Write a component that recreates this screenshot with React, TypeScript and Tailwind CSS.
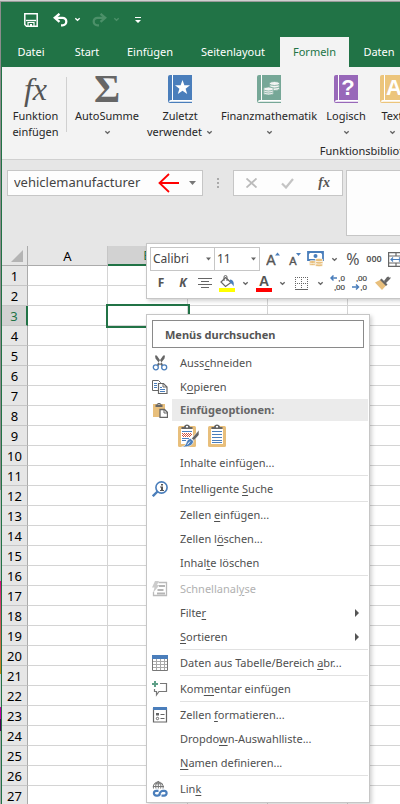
import { useState, type ReactNode } from "react";

const COLUMNS = ["A", "B", "C", "D", "E", "F", "G", "H", "I", "J", "K", "L"];
const ROWS = Array.from({ length: 27 }, (_, i) => i + 1);
const TABS = ["Datei", "Start", "Einfügen", "Seitenlayout", "Formeln", "Daten"];

const TAB_WIDTHS: Record<string, string> = {
  Datei: "w-[58px]",
  Start: "w-[54px]",
  Einfügen: "w-[72px]",
  Seitenlayout: "w-[94px]",
  Formeln: "w-[69px]",
  Daten: "w-[60px]",
};

type IconProps = { className?: string };

function Chevron({ className = "text-[#666]" }: IconProps) {
  return (
    <svg width="7" height="5" viewBox="0 0 7 5" className={`shrink-0 ${className}`} aria-hidden="true">
      <path d="M1.300 1.200L3.500 3.300L5.700 1.200" fill="none" stroke="currentColor" strokeWidth="1.300" />
    </svg>
  );
}

function Caret({ className = "text-[#666]" }: IconProps) {
  return (
    <svg width="7" height="4" viewBox="0 0 7 4" className={`shrink-0 ${className}`} aria-hidden="true">
      <path d="M0 0h7L3.500 4z" fill="currentColor" />
    </svg>
  );
}

function SaveIcon() {
  return (
    <svg width="14" height="14" viewBox="0 0 14 14" fill="none" stroke="#fff" aria-hidden="true">
      <path d="M.8.800h12.400v12.400H2.500L.8 11.500z" strokeWidth="1.500" />
      <path d="M2 7.500h10" strokeWidth="1.400" />
      <path d="M4 13V9.500h6V13" strokeWidth="1.200" />
      <path d="M6 11h2v2H6z" fill="#fff" stroke="none" />
    </svg>
  );
}

function UndoIcon({ className = "" }: IconProps) {
  return (
    <svg width="15" height="14" viewBox="0 0 15 14" fill="none" stroke="currentColor" strokeWidth="2.300" className={className} aria-hidden="true">
      <path d="M6.500 .8L1.800 4.800L6.500 8.800" />
      <path d="M2 4.800h7.500a3.800 3.800 0 0 1 0 7.600H8" />
    </svg>
  );
}

function BookIcon({ color, children }: { color: string; children: ReactNode }) {
  return (
    <svg width="24" height="28" viewBox="0 0 24 28" aria-hidden="true">
      <path d="M2 0h22v28H2a2 2 0 0 1-2-2V2a2 2 0 0 1 2-2z" fill={color} />
      <path d="M4.500 0v25" stroke="#fff" />
      <path d="M24 25.800H3a1.500 1.500 0 0 0-1.500 1" fill="none" stroke="#fff" strokeWidth="1.800" />
      {children}
    </svg>
  );
}

function StarBook() {
  return (
    <BookIcon color="#4a7ebb">
      <path d="M14.500 5l1.900 5.200 5.600.1-4.400 3.400 1.600 5.300-4.700-3.200-4.700 3.200 1.600-5.300L7 10.300l5.600-.1z" fill="#fff" />
    </BookIcon>
  );
}

function CoinsBook() {
  return (
    <BookIcon color="#76a797">
      <g fill="#f3f3f3" stroke="#76a797" strokeWidth=".8">
        <ellipse cx="17.500" cy="13.500" rx="5" ry="2" />
        <ellipse cx="17.500" cy="11" rx="5" ry="2" />
        <ellipse cx="17.500" cy="8.500" rx="5" ry="2" />
        <ellipse cx="11.500" cy="18" rx="5" ry="2" />
        <ellipse cx="11.500" cy="16" rx="5" ry="2" />
        <ellipse cx="11.500" cy="14" rx="5" ry="2" />
      </g>
    </BookIcon>
  );
}

function LetterBook({ color, letter }: { color: string; letter: string }) {
  return (
    <BookIcon color={color}>
      <text x="14" y="20" textAnchor="middle" fill="#fff" fontSize="22" fontWeight="700" fontFamily="Liberation Sans, sans-serif">
        {letter}
      </text>
    </BookIcon>
  );
}

function AlignIcon() {
  return (
    <svg width="14" height="11" viewBox="0 0 14 11" stroke="#666" aria-hidden="true">
      <path d="M0 .5h14M3 3.500h8M0 6.500h14M3 9.500h8" />
    </svg>
  );
}

function BucketIcon() {
  return (
    <svg width="16" height="17" viewBox="0 0 16 17" aria-hidden="true">
      <path d="M6.500 2.500L12 7.500l-5.500 4L2 7z" fill="#fff" stroke="#666" strokeWidth="1.200" />
      <path d="M5 6V2a1.500 1.500 0 0 1 3 0v4" fill="none" stroke="#666" />
      <path d="M11 4.500c3 .3 4.500 2.500 3.500 7-.8-2-1.500-3-3.500-3.500z" fill="#4a7ebb" />
      <path d="M0 13h16v4H0z" fill="#ff0" />
    </svg>
  );
}

function FontColorIcon() {
  return (
    <svg width="16" height="17" viewBox="0 0 16 17" aria-hidden="true">
      <text x="8" y="11" textAnchor="middle" fontSize="14" fontWeight="700" fill="#555" fontFamily="Liberation Sans, sans-serif">
        A
      </text>
      <path d="M0 13h16v4H0z" fill="#f00" />
    </svg>
  );
}

function BorderIcon() {
  return (
    <svg width="13" height="13" viewBox="0 0 13 13" stroke="#666" aria-hidden="true">
      <path d="M0 .5h13M0 6.500h13M.5 0v12M6.500 0v12M12.500 0v12" strokeDasharray="1 1" />
      <path d="M0 12.500h13" />
    </svg>
  );
}

function DecimalIcon({ top, bottom, right }: { top: string; bottom: string; right?: boolean }) {
  return (
    <svg width="16" height="18" viewBox="0 0 16 18" aria-hidden="true">
      <g fontSize="8" fill="#444" stroke="#444" strokeWidth=".2" fontFamily="Liberation Sans, sans-serif">
        <text x="15" y="7" textAnchor="end">{top}</text>
        <text x="15" y="16" textAnchor="end">{bottom}</text>
      </g>
      <path
        d={right ? "M0 13h6M4 10.500L6.500 13 4 15.500" : "M7 4H1M3.500 1.500L1 4l2.500 2.500"}
        fill="none"
        stroke="#4a7ebb"
        strokeWidth="1.500"
      />
    </svg>
  );
}

function BrushIcon() {
  return (
    <svg width="16" height="14" viewBox="0 0 16 14" aria-hidden="true">
      <path d="M0 6.500l6-3 5.500 5.500-4.500 5z" fill="#e8bf7c" />
      <path d="M6.500 2.500l6 6-1.500 1.500-6-6z" fill="#666" />
      <path d="M9 5l3-4 1.500-.5.5 1L16 1.500 15 3l-4.500 4.500z" fill="#666" />
    </svg>
  );
}

function CurrencyIcon() {
  return (
    <svg width="17" height="16" viewBox="0 0 17 16" aria-hidden="true">
      <path d="M1 1h15v8H1z" fill="#fff" stroke="#4a7ebb" strokeWidth="1.800" />
      <circle cx="8.500" cy="5" r="2" fill="#4a7ebb" />
      <path d="M1 1h3L1 4zM16 1h-3l3 3z" fill="#4a7ebb" />
      <g fill="#e8bf7c" stroke="#fff" strokeWidth=".7">
        <ellipse cx="12" cy="14" rx="4" ry="1.700" />
        <ellipse cx="12" cy="11.500" rx="4" ry="1.700" />
        <ellipse cx="12" cy="9" rx="4" ry="1.700" />
        <ellipse cx="5.500" cy="13" rx="3.500" ry="1.500" />
        <ellipse cx="5.500" cy="11" rx="3.500" ry="1.500" />
      </g>
    </svg>
  );
}

function MergeIcon() {
  return (
    <svg width="16" height="15" viewBox="0 0 16 15" fill="none" aria-hidden="true">
      <path d="M.6.600h14.800v13.800H.6zM.6 4h14.800M.6 11h14.800M8 .6V4M8 11v3.400" stroke="#666" strokeWidth="1.200" />
      <path d="M2.500 7.500h11M5 5.500l-2 2 2 2M11 5.500l2 2-2 2" stroke="#4a7ebb" strokeWidth="1.200" />
    </svg>
  );
}

function ResizeFontIcon({ down }: { down?: boolean }) {
  return (
    <svg width="15" height="14" viewBox="0 0 15 14" aria-hidden="true">
      <text x="5" y="13" textAnchor="middle" fontSize={down ? 11 : 14} stroke="#555" strokeWidth=".4" fill="#555" fontFamily="Liberation Sans, sans-serif">
        A
      </text>
      <path d={down ? "M8 1h5l-2.500 3z" : "M9 3.500h5L11.500.5z"} fill="#4a7ebb" />
    </svg>
  );
}

function CutIcon() {
  return (
    <svg width="16" height="16" viewBox="0 0 16 16" fill="none" aria-hidden="true">
      <path d="M3 .5L4.800 .5L11 9.500l-1.500 1.500L3.500 3.500zM13 .5L11.200 .5L5 9.500l1.500 1.500L12.500 3.500z" fill="#666" />
      <circle cx="3.800" cy="12.300" r="2.500" stroke="#4a7ebb" strokeWidth="1.300" />
      <circle cx="12.200" cy="12.300" r="2.500" stroke="#4a7ebb" strokeWidth="1.300" />
    </svg>
  );
}

function CopyIcon() {
  return (
    <svg width="16" height="16" viewBox="0 0 16 16" fill="#fff" stroke="#666" aria-hidden="true">
      <path d="M.5 1.500h6l2 2v8h-8z" />
      <path d="M2 4.500h3M2 6.500h3M2 8.500h3" stroke="#4a7ebb" />
      <path d="M6.500 4.500h5l3.500 3.500v6.500H6.500z" strokeWidth="1.200" />
      <path d="M11 4.500V8h4" fill="none" />
      <path d="M8 8.500h2M8 10.500h5M8 12.500h5" stroke="#4a7ebb" />
    </svg>
  );
}

function PasteIcon() {
  return (
    <svg width="16" height="16" viewBox="0 0 16 16" aria-hidden="true">
      <path d="M1 2h12v13H1z" fill="#e8bf7c" />
      <path d="M3.500 5V2.500H5.500V1h3v1.500h2V5z" fill="#666" />
      <path d="M6.500 2h1v1h-1z" fill="#fff" />
      <path d="M8 7.500h4.500l3 3v5H8z" fill="#fff" stroke="#666" strokeWidth="1.300" />
      <path d="M12 7.500v3.500h3.500" fill="none" stroke="#666" />
    </svg>
  );
}

function ClipboardBase({ children }: { children: ReactNode }) {
  return (
    <svg width="22" height="24" viewBox="0 0 22 24" aria-hidden="true">
      <rect x="0" y="2" width="18" height="21" rx="1.500" fill="#e8bf7c" />
      <path d="M3 5h12v15H3z" fill="#fff" />
      <path d="M3.500 5V3H6c0-3.500 6-3.500 6 0h2.500v2z" fill="#666" />
      <path d="M8 2h2v1.500H8z" fill="#fff" />
      {children}
    </svg>
  );
}

function PasteFormatIcon() {
  return (
    <ClipboardBase>
      <path d="M4 7.500h10M4 16.500h4M4 14.500h7" stroke="#4a7ebb" />
      <path d="M4 9.500h10M4 11.500h10" stroke="#d2553c" strokeDasharray="1 1" />
      <path d="M5 10.500h9M5 12.500h8" stroke="#d2553c" strokeDasharray="1 1" />
      <path d="M21 6v5l-5 5.500-2.500-2z" fill="#666" stroke="#fff" strokeWidth=".6" />
      <path d="M12.500 14.500l3 2.500c-.5 4-3.500 6-12 6 3.500-1 4-2 5-5 .8-2 2.500-3.200 4-3.500z" fill="#4a7ebb" stroke="#fff" strokeWidth=".6" />
      <path d="M9.500 20.500l2.500-3" stroke="#fff" />
    </ClipboardBase>
  );
}

function PasteTextIcon() {
  return (
    <ClipboardBase>
      <path d="M4 7.500h10M4 10.500h10M4 13.500h10M4 16.500h10M4 18.500h10" stroke="#4a7ebb" />
    </ClipboardBase>
  );
}

function LookupIcon() {
  return (
    <svg width="16" height="16" viewBox="0 0 16 16" fill="none" aria-hidden="true">
      <circle cx="9.500" cy="6.500" r="5.600" stroke="#4a7ebb" strokeWidth="1.600" />
      <path d="M5.500 10.500L.8 15.200" stroke="#4a7ebb" strokeWidth="2.400" />
      <path d="M9 3h2v1.500H9zM8 5.500h3V9h1v1H8V9h1V6.500H8z" fill="#555" />
    </svg>
  );
}

function QuickAnalysisIcon() {
  return (
    <svg width="16" height="16" viewBox="0 0 16 16" aria-hidden="true">
      <path d="M6.500 1.500h8v13h-13V11" fill="none" stroke="#bbb" strokeWidth="1.300" />
      <path d="M3 0h4L5 4h2.500L1 12l1.500-5.500H0z" fill="#ccc" />
      <path d="M7 4h6v2H7zM5.500 8h6v2h-6zM5 11.500h8v2H5z" fill="#b5b5b5" />
    </svg>
  );
}

function TableIcon() {
  return (
    <svg width="16" height="16" viewBox="0 0 16 16" aria-hidden="true">
      <path d="M.5.500h15v15H.5z" fill="#fff" stroke="#777" />
      <path d="M1 6.500h14M1 9.500h14M1 12.500h14M4.500 4v11M8.500 4v11M12.500 4v11" stroke="#aaa" />
      <path d="M0 0h16v4H0z" fill="#4a7ebb" />
    </svg>
  );
}

function CommentIcon() {
  return (
    <svg width="16" height="16" viewBox="0 0 16 16" fill="none" aria-hidden="true">
      <path d="M8 2.500h6.500v8H7L4.500 14v-3.500H2.500V8" stroke="#777" strokeWidth="1.200" />
      <path d="M3 0v6M0 3h6" stroke="#5fa088" strokeWidth="2" />
    </svg>
  );
}

function FormatCellsIcon() {
  return (
    <svg width="16" height="16" viewBox="0 0 16 16" fill="none" aria-hidden="true">
      <path d="M1.500 1v14h13V1" fill="#fff" stroke="#666" strokeWidth="1.200" />
      <path d="M1 0h14v3H1z" fill="#4a7ebb" />
      <path d="M4 6h3v2.500H4z" fill="#666" />
      <path d="M8.500 7.500h4M8.500 11.500h4" stroke="#666" />
      <circle cx="5.500" cy="11.500" r="1.200" stroke="#666" />
    </svg>
  );
}

function LinkIcon() {
  return (
    <svg width="16" height="16" viewBox="0 0 16 16" fill="none" aria-hidden="true">
      <path d="M1.500 7.500a5 5 0 1 1 9.500 0M1 5.500h11M2.500 2.800h8M6.300 0v7.500M4 7.500c-.8-2.500-.3-5.500 2.300-7 2.600 1.500 3.100 4.500 2.300 7" stroke="#777" />
      <path d="M6.500 9.800H4.300a2.400 2.400 0 0 0 0 4.800h1.500c1.200 0 1.700-.6 2.400-1.600" stroke="#4a7ebb" strokeWidth="2.200" />
      <path d="M9.500 14.600h2.700a2.400 2.400 0 0 0 0-4.800h-1.500c-1.200 0-1.700.6-2.400 1.600l-1 1.600" stroke="#4a7ebb" strokeWidth="2.200" />
    </svg>
  );
}

// "_x_" marks the access key
function MenuLabel({ text }: { text: string }) {
  const [before, key, after] = text.split("_");
  return (
    <span className="whitespace-nowrap">
      {before}
      {key && <u className="underline-offset-2">{key}</u>}
      {after}
    </span>
  );
}

type MenuItemProps = {
  label: string;
  icon?: ReactNode;
  disabled?: boolean;
  submenu?: boolean;
};

function MenuItem({ label, icon, disabled, submenu }: MenuItemProps) {
  return (
    <button type="button" role="menuitem" disabled={disabled} className="flex h-6 w-full items-center pr-[10px] text-left disabled:text-[#b1b1b1]">
      <span className="flex w-[33px] shrink-0 pl-[5px]">{icon}</span>
      <MenuLabel text={label} />
      {submenu && (
        <svg width="4" height="8" viewBox="0 0 4 8" className="ml-auto" aria-hidden="true">
          <path d="M0 0l4 4-4 4z" fill="#555" />
        </svg>
      )}
    </button>
  );
}

function MenuSeparator() {
  return <div role="separator" className="ml-[33px] mr-px h-[2px] border-t border-[#e1e1e1]" />;
}

function ContextMenu() {
  return (
    <div role="menu" className="absolute left-[144px] top-[68px] w-[224px] border border-[#c6c6c6] bg-white pb-px text-[#505050] shadow-[2px_2px_4px_rgba(0,0,0,0.18)]">
      <div className="px-[5px] pb-[3px] pt-[5px]">
        <input
          type="search"
          aria-label="Menüs durchsuchen"
          placeholder="Menüs durchsuchen"
          className="block h-7 w-full border border-[#8a8a8a] bg-white px-3 font-bold placeholder:text-[#555] placeholder:opacity-100"
        />
      </div>
      <MenuItem label="Auss_c_hneiden" icon={<CutIcon />} />
      <MenuItem label="K_o_pieren" icon={<CopyIcon />} />
      <div className="flex h-[22px] items-center">
        <span className="flex w-[25px] shrink-0 pl-[5px]">
          <PasteIcon />
        </span>
        <span className="mr-px flex h-full flex-1 items-center bg-[#ebebeb] pl-2 font-bold text-[#666]">Einfügeoptionen:</span>
      </div>
      <div className="flex h-[30px] items-center gap-2 pl-[31px]">
        <button type="button" aria-label="Einfügen mit Formatierung">
          <PasteFormatIcon />
        </button>
        <button type="button" aria-label="Nur Text einfügen">
          <PasteTextIcon />
        </button>
      </div>
      <MenuItem label="Inhalte einfü_g_en..." />
      <MenuSeparator />
      <MenuItem label="Intelligente _S_uche" icon={<LookupIcon />} />
      <MenuSeparator />
      <MenuItem label="Zellen _e_infügen..." />
      <MenuItem label="Zellen l_ö_schen..." />
      <MenuItem label="Inhal_t_e löschen" />
      <MenuSeparator />
      <MenuItem label="Schnellanal_y_se" icon={<QuickAnalysisIcon />} disabled />
      <MenuItem label="Filte_r_" submenu />
      <MenuItem label="_S_ortieren" submenu />
      <MenuSeparator />
      <MenuItem label="Daten aus Tabelle/Bereich _a_br..." icon={<TableIcon />} />
      <MenuSeparator />
      <MenuItem label="Kom_m_entar einfügen" icon={<CommentIcon />} />
      <MenuSeparator />
      <MenuItem label="Zellen _f_ormatieren..." icon={<FormatCellsIcon />} />
      <MenuItem label="Dropdo_w_n-Auswahlliste..." />
      <MenuItem label="_N_amen definieren..." />
      <MenuSeparator />
      <MenuItem label="Lin_k_" icon={<LinkIcon />} />
    </div>
  );
}

function ToolButton({ label, width, children }: { label: string; width: string; children: ReactNode }) {
  return (
    <button type="button" aria-label={label} className={`flex h-6 shrink-0 items-center justify-center ${width}`}>
      {children}
    </button>
  );
}

function ToolSelect({ label, options, width }: { label: string; options: string[]; width: string }) {
  return (
    <div className={`relative shrink-0 ${width}`}>
      <select aria-label={label} className="h-6 w-full appearance-none border border-[#c6c6c6] bg-white pl-[2px] text-xs text-[#444]">
        {options.map((o) => (
          <option key={o}>{o}</option>
        ))}
      </select>
      <Caret className="pointer-events-none absolute right-[4px] top-[10px] w-[5px] text-[#666]" />
    </div>
  );
}

function MiniToolbar() {
  return (
    <div role="toolbar" className="absolute -top-[3px] left-[144px] w-[270px] border border-[#c6c6c6] bg-white px-[3px] py-[3px] text-[#555] shadow-[2px_2px_4px_rgba(0,0,0,0.18)]">
      <div className="flex items-center">
        <ToolSelect label="Schriftart" options={["Calibri", "Arial"]} width="w-[65px]" />
        <ToolSelect label="Schriftgrad" options={["11", "12", "14"]} width="-ml-px w-[46px]" />
        <ToolButton label="Schriftgrad vergrößern" width="w-[26px]"><ResizeFontIcon /></ToolButton>
        <ToolButton label="Schriftgrad verkleinern" width="w-[18px]"><ResizeFontIcon down /></ToolButton>
        <ToolButton label="Buchhaltungszahlenformat" width="w-[22px]"><CurrencyIcon /></ToolButton>
        <ToolButton label="Weitere Währungen" width="w-4"><Chevron /></ToolButton>
        <ToolButton label="Prozentformat" width="w-[22px]"><span className="text-base">%</span></ToolButton>
        <ToolButton label="1.000er-Trennzeichen" width="w-5"><span className="text-[9px] font-semibold">000</span></ToolButton>
        <ToolButton label="Verbinden und zentrieren" width="w-6"><MergeIcon /></ToolButton>
      </div>
      <div className="flex items-center">
        <ToolButton label="Fett" width="w-[22px]"><span className="text-xs font-bold">F</span></ToolButton>
        <ToolButton label="Kursiv" width="w-[22px]"><span className="text-xs font-bold italic">K</span></ToolButton>
        <ToolButton label="Zentriert" width="w-[22px]"><AlignIcon /></ToolButton>
        <ToolButton label="Füllfarbe" width="w-[22px]"><BucketIcon /></ToolButton>
        <ToolButton label="Weitere Füllfarben" width="w-[14px]"><Chevron /></ToolButton>
        <ToolButton label="Schriftfarbe" width="w-6"><FontColorIcon /></ToolButton>
        <ToolButton label="Weitere Schriftfarben" width="w-3"><Chevron /></ToolButton>
        <ToolButton label="Rahmen" width="w-[26px]"><BorderIcon /></ToolButton>
        <ToolButton label="Weitere Rahmen" width="w-3"><Chevron /></ToolButton>
        <ToolButton label="Dezimalstelle hinzufügen" width="w-6"><DecimalIcon top=",0" bottom=",00" /></ToolButton>
        <ToolButton label="Dezimalstelle löschen" width="w-5"><DecimalIcon top=",00" bottom=",0" right /></ToolButton>
        <ToolButton label="Format übertragen" width="w-[26px]"><BrushIcon /></ToolButton>
      </div>
    </div>
  );
}

type RibbonButtonProps = {
  icon: ReactNode;
  lines: string[];
  width: string;
  dropdown?: boolean;
};

function RibbonButton({ icon, lines, width, dropdown }: RibbonButtonProps) {
  return (
    <button type="button" className={`flex shrink-0 flex-col items-center whitespace-nowrap ${width}`}>
      <span className="mb-[5px] flex h-7 items-center justify-center">{icon}</span>
      <span className="leading-4">{lines[0]}</span>
      <span className="flex h-4 items-center gap-1 leading-4">
        {lines[1]}
        {dropdown && <Chevron />}
      </span>
    </button>
  );
}

function Ribbon() {
  return (
    <div className="flex h-[93px] overflow-hidden border-b border-[#d0d0d0] bg-[#f3f3f3] pt-2 text-[#262626]">
      <div className="flex w-[64px] shrink-0 justify-center pl-[3px]">
        <RibbonButton
          icon={<span className="font-['Liberation_Serif',serif] text-[32px] italic leading-7 text-[#555]">fx</span>}
          lines={["Funktion", "einfügen"]}
          width="w-full"
        />
      </div>
      <div className="mt-[2px] h-[55px] w-px shrink-0 bg-[#d0d0d0]" />
      <div className="flex w-[608px] shrink-0 flex-col">
        <div className="flex">
          <RibbonButton
            icon={<span className="font-['Liberation_Serif',serif] text-[40px] font-bold leading-7 text-[#666]">Σ</span>}
            lines={["AutoSumme"]}
            width="w-20"
            dropdown
          />
          <RibbonButton icon={<StarBook />} lines={["Zuletzt", "verwendet"]} width="w-[66px]" dropdown />
          <RibbonButton icon={<CoinsBook />} lines={["Finanzmathematik"]} width="w-28" dropdown />
          <RibbonButton icon={<LetterBook color="#9868b9" letter="?" />} lines={["Logisch"]} width="w-[42px]" dropdown />
          <RibbonButton icon={<LetterBook color="#ecc57c" letter="A" />} lines={["Text"]} width="w-[50px]" dropdown />
        </div>
        <div className="mt-[3px] text-center leading-4">Funktionsbibliothek</div>
      </div>
    </div>
  );
}

function TitleBar() {
  return (
    <div className="flex h-[35px] items-center pl-[22px] text-white">
      <button type="button" aria-label="Speichern"><SaveIcon /></button>
      <button type="button" aria-label="Rückgängig" className="ml-[15px]"><UndoIcon /></button>
      <button type="button" aria-label="Rückgängig-Liste" className="ml-[6px]"><Chevron className="text-white" /></button>
      <button type="button" aria-label="Wiederholen" disabled className="ml-[11px] text-[#4c9069]"><UndoIcon className="-scale-x-100" /></button>
      <button type="button" aria-label="Wiederholen-Liste" disabled className="ml-[6px]"><Chevron className="text-[#4c9069]" /></button>
      <button type="button" aria-label="Symbolleiste anpassen" className="ml-[15px]">
        <svg width="6" height="6" viewBox="0 0 6 6" fill="#fff" aria-hidden="true">
          <path d="M0 0h6v1H0zM0 3h6L3 6z" />
        </svg>
      </button>
    </div>
  );
}

function FormulaBar() {
  const [name, setName] = useState("vehiclemanufacturer");
  return (
    <div className="flex h-[86px] items-start overflow-hidden bg-[#e6e6e6] pl-[5px] pt-[10px]">
      <div className="flex h-[26px] w-[196px] shrink-0 items-center border border-[#c6c6c6] bg-[#fdfdfd] pl-[6px] pr-[6px]">
        <input
          aria-label="Namenfeld"
          value={name}
          onChange={(e) => setName(e.target.value)}
          className="min-w-0 flex-1 bg-transparent text-[13px] text-[#444] outline-none"
        />
        <svg width="21" height="20" viewBox="0 0 21 20" fill="none" stroke="#f00" strokeWidth="1.800" className="shrink-0" aria-hidden="true">
          <path d="M21 10H1.500M11 1L1.500 10l9.500 9" />
        </svg>
        <button type="button" aria-label="Namen auswählen" className="ml-[10px]"><Caret className="text-[#777]" /></button>
      </div>
      <svg width="2" height="10" viewBox="0 0 2 10" className="ml-[14px] mt-2 shrink-0" aria-hidden="true">
        <path d="M0 0h2v2H0zM0 4h2v2H0zM0 8h2v2H0z" fill="#aaa" />
      </svg>
      <div className="ml-[14px] flex h-[26px] w-[110px] shrink-0 items-center justify-around border border-[#c6c6c6] bg-[#fdfdfd]">
        <button type="button" aria-label="Abbrechen" disabled>
          <svg width="11" height="10" viewBox="0 0 11 10" stroke="#bbb" strokeWidth="1.800" aria-hidden="true">
            <path d="M.5.500l10 9M10.500.5l-10 9" />
          </svg>
        </button>
        <button type="button" aria-label="Eingeben" disabled>
          <svg width="13" height="11" viewBox="0 0 13 11" fill="none" stroke="#c4c4c4" strokeWidth="2.200" aria-hidden="true">
            <path d="M1 5.500l4 4L12 1" />
          </svg>
        </button>
        <button type="button" aria-label="Funktion einfügen" className="font-['Liberation_Serif',serif] text-sm font-bold italic leading-4 text-[#555]">
          fx
        </button>
      </div>
      <input aria-label="Bearbeitungsleiste" className="ml-[3px] h-[66px] min-w-0 flex-1 border border-r-0 border-[#c6c6c6] bg-[#fdfdfd] px-2 outline-none" />
    </div>
  );
}

function Sheet() {
  return (
    <table className="w-[986px] table-fixed border-separate border-spacing-0 text-center text-[13px] leading-4 text-black">
      <colgroup>
        <col className="w-[26px]" />
        {COLUMNS.map((c) => (
          <col key={c} className="w-20" />
        ))}
      </colgroup>
      <thead>
        <tr className="h-5 bg-[#e6e6e6]">
          <th aria-label="Alles auswählen" className="h-5 border-b border-r border-[#ababab] p-0 pr-1">
            <svg width="12" height="12" viewBox="0 0 12 12" className="ml-auto" aria-hidden="true">
              <path d="M12 0v12H0z" fill="#b4b4b4" />
            </svg>
          </th>
          {COLUMNS.map((c) => (
            <th
              key={c}
              scope="col"
              className={`h-5 border-r p-0 font-normal ${
                c === "B" ? "border-b-2 border-b-[#217346] border-r-[#ababab] bg-[#d2d2d2] text-[#217346]" : "border-b border-b-[#ababab] border-r-[#c6c6c6]"
              }`}
            >
              {c}
            </th>
          ))}
        </tr>
      </thead>
      <tbody>
        {ROWS.map((r) => (
          <tr key={r} className="h-5">
            <th
              scope="row"
              className={`h-5 border-b border-b-[#c6c6c6] p-0 font-normal ${
                r === 3 ? "border-r-2 border-r-[#217346] bg-[#d2d2d2] text-[#217346]" : "border-r border-r-[#ababab] bg-[#e6e6e6]"
              }`}
            >
              {r}
            </th>
            {COLUMNS.map((c) => (
              <td
                key={c}
                className={`h-5 border-b border-r border-[#d4d4d4] p-0 ${r === 3 && c === "B" ? "outline-2 outline-[#217346]" : ""}`}
              />
            ))}
          </tr>
        ))}
      </tbody>
    </table>
  );
}

// sliver of the desktop that shows beside the window
function DesktopEdge() {
  return (
    <div className="flex w-px shrink-0 flex-col bg-[#aaa]">
      <div className="h-[488px] bg-[#8c8c8c]" />
      <div className="h-[91px] bg-[#bbb]" />
      <div className="h-[93px] bg-linear-to-b from-[#d4007f] to-[#c78a00]" />
      <div className="h-[33px] bg-[#ccc]" />
      <div className="h-3 bg-[#c000a0]" />
      <div className="h-3 bg-[#500050]" />
    </div>
  );
}

export default function App() {
  const [activeTab, setActiveTab] = useState("Formeln");

  return (
    <div className="flex h-screen flex-col overflow-hidden border-t border-[#cfcfcf] font-['Noto_Sans','Open_Sans',sans-serif] text-[11px]">
      <div className="h-px shrink-0 bg-[#9a9a9a]" />
      <div className="flex min-h-0 flex-1">
        <DesktopEdge />
        <div className="flex min-w-0 flex-1 flex-col border-l border-[#217346]">
          <header className="shrink-0 bg-[#217346]">
            <TitleBar />
            <nav className="flex h-[30px] overflow-hidden">
              {TABS.map((tab) => (
                <button
                  key={tab}
                  type="button"
                  onClick={() => setActiveTab(tab)}
                  className={`shrink-0 ${TAB_WIDTHS[tab]} ${activeTab === tab ? "bg-[#f3f3f3] text-[#217346]" : "text-white"}`}
                >
                  {tab}
                </button>
              ))}
            </nav>
          </header>
          <Ribbon />
          <FormulaBar />
          <main className="relative min-h-0 flex-1 bg-white">
            <div className="h-full overflow-hidden">
              <Sheet />
            </div>
            <MiniToolbar />
            <ContextMenu />
          </main>
        </div>
      </div>
    </div>
  );
}
